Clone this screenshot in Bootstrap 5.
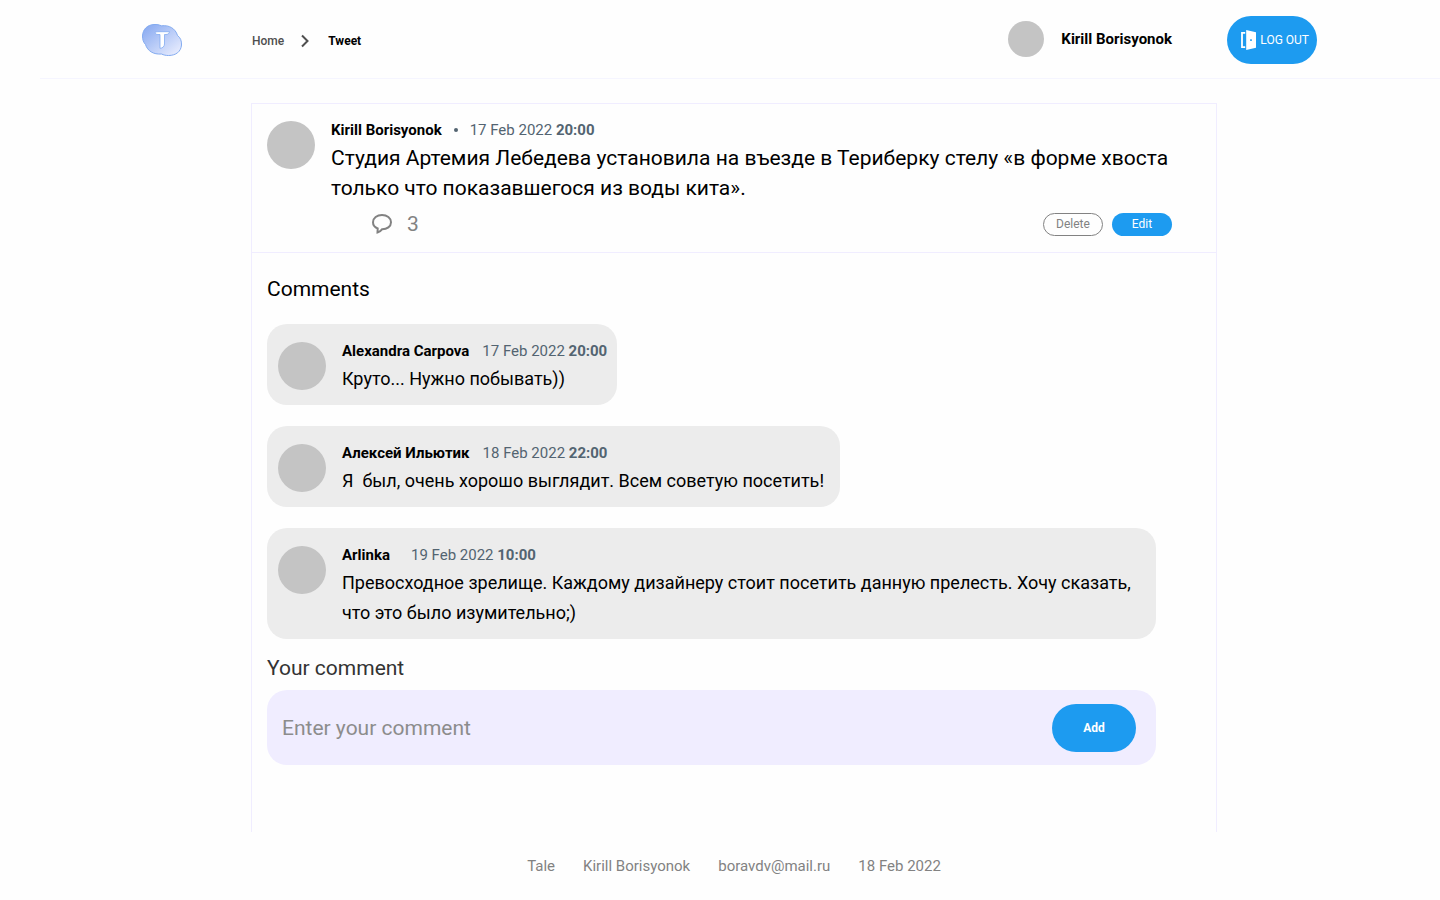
<!DOCTYPE html>
<html lang="en">
<head>
<meta charset="utf-8">
<meta name="viewport" content="width=device-width, initial-scale=1">
<title>Tweet</title>
<link rel="stylesheet" href="https://cdn.jsdelivr.net/npm/bootstrap@5.3.0/dist/css/bootstrap.min.css">
<style>
body{font-family:Roboto,"Noto Sans",sans-serif;font-size:15px;line-height:18px;color:#000;background:#fefefe;padding-left:28px}
.site-header{margin-left:12px;border-bottom:1px solid #f5f5ff}
.header-inner{max-width:1196px;min-height:78px;padding-right:21px}
.crumbs{font-size:12px;font-weight:500;margin-left:70px;gap:17px;padding-top:4px}
.crumbs a{color:#4f4f4f}
.crumbs .active{color:#000;font-weight:700}
.brand,.btn-out{margin-top:2px}
.face{background:#c4c4c4;border-radius:50%;width:48px;height:48px}
.face-sm{width:36px;height:36px}
.who{font-weight:700}
.me{gap:17px;margin-right:55px}
.btn-blue{background:#1d9bf0;color:#fff;border:0;border-radius:24px;font-size:12px;line-height:18px}
.btn-blue:hover{background:#1787d4;color:#fff}
.btn-out{width:90px;height:48px;gap:4px;padding:0 8px 0 12px}
.btn-add{width:84px;height:48px;font-weight:700}
.btn-mini{width:60px;height:23px;padding:0;font-size:12px;line-height:18px;border-radius:12px}
.btn-del{border:1px solid #828282;color:#828282;background:transparent}
.feed{max-width:966px;margin-top:24px;border:1px solid #f0edff;border-bottom:0;min-height:729px}
.tweet{padding:17px 44px 16px 15px;border-bottom:1px solid #f0edff}
.when{color:#536471}
.dot{width:4px;height:4px;border-radius:50%;background:#536471;margin:0 12px}
.tweet-text{font-size:21px;line-height:30px;margin:4px 0 9px}
.tweet-actions{gap:9px}
.replies{font-size:21px;line-height:24px;color:#828282;gap:15px;margin-left:41px}
.section-title{font-size:21px;line-height:24px;font-weight:400;margin:0}
.thread{padding:24px 60px 0 15px}
.notes{gap:21px;margin:23px 0 17px}
.note{background:#ececec;border-radius:20px;padding:18px 10px 11px 11px}
.note-head{gap:13px}
.note-text{font-size:18px;line-height:30px;margin:4px 0 0;white-space:pre-wrap}
.composer-label{color:#333}
.composer{background:#f0edff;border-radius:20px;min-height:75px;padding:0 20px 0 15px;margin-top:10px}
.composer input{font-family:inherit;font-size:21px;line-height:30px;border:0;background:transparent;padding:0;color:#000;outline:0;min-width:0}
.composer input::placeholder{color:#8c8c8c;opacity:1}
.site-footer{color:#828282;gap:28px;padding:25px 0}
</style>
</head>
<body>
<header class="site-header">
  <div class="header-inner d-flex align-items-center mx-auto">
    <a href="#" aria-label="Tale" class="brand d-block">
      <svg width="40" height="32" viewBox="0 0 40 32" class="d-block">
        <defs><linearGradient id="lg" x1="0" y1="0" x2="1" y2="1"><stop offset="0" stop-color="#83a6f0"/><stop offset="1" stop-color="#f0f2ff"/></linearGradient></defs>
        <path d="M12 .5C15 .3 17 .8 19.500 1.800C27 .8 33.500 4.500 35.500 11.500C38.500 13.500 39.700 17 39.500 21C39 27.500 34 31.500 26.500 31.500C24 31.500 21.500 31 19.500 30C11.500 30.700 5.500 27 3.500 20.500C1.500 18.500 .4 15.500 .5 12C.8 5.500 5 .9 12 .5Z" fill="url(#lg)" stroke="#83abf0" stroke-width="1"/>
        <path d="M13 8.500C14 7.700 15.500 7.700 17 7.700H27.500C27.200 9.500 26 10.500 24 10.500H22.500V20C22.500 22.500 20.500 24.200 18 24.300V10.500H16C14.500 10.500 13.300 10 13 8.500Z" fill="#fff" stroke="#83abf0" stroke-width=".8"/>
      </svg>
    </a>
    <nav class="crumbs d-flex align-items-center" aria-label="Breadcrumb">
      <a href="#" class="text-decoration-none">Home</a>
      <svg width="10" height="14" viewBox="0 0 10 14"><path d="M1 1.500L6.500 7L1 12.500" fill="none" stroke="#4f4f4f" stroke-width="2"/></svg>
      <a href="#" class="active text-decoration-none" aria-current="page">Tweet</a>
    </nav>
    <div class="me d-flex align-items-center ms-auto">
      <div class="face face-sm"></div>
      <span class="who">Kirill Borisyonok</span>
    </div>
    <button type="button" class="btn btn-blue btn-out d-flex align-items-center justify-content-end text-nowrap">
      <svg width="15" height="20" viewBox="0 0 15 20" class="flex-shrink-0"><path d="M4.200 2.800H1V17.200H4.200" fill="none" stroke="#fff" stroke-width="1.800"/><path fill-rule="evenodd" d="M5.200 0L15 2.200V17.800L5.200 20ZM9.200 9.200V11H10.800V9.200Z" fill="#fff"/></svg>
      LOG OUT
    </button>
  </div>
</header>

<main class="feed mx-auto">
  <article class="tweet d-flex gap-3">
    <div class="face flex-shrink-0"></div>
    <div class="flex-grow-1">
      <div class="d-flex align-items-center">
        <span class="who">Kirill Borisyonok</span><span class="dot"></span>
        <span class="when">17 Feb 2022 <b>20:00</b></span>
      </div>
      <p class="tweet-text">Студия Артемия Лебедева установила на въезде в Териберку стелу «в форме хвоста только что показавшегося из воды кита».</p>
      <div class="tweet-actions d-flex align-items-center">
        <div class="replies d-flex align-items-center me-auto">
          <svg width="20" height="20" viewBox="0 0 20 20"><path d="M10 1C15 1 19 4 19 8.300C19 12.500 15 15.400 10 15.300C8.700 17 7.300 18 5.500 18.500L5.700 14.500C3 13.500 1 11.300 1 8.300C1 4 5 1 10 1Z" fill="none" stroke="#828282" stroke-width="2"/></svg>
          <span>3</span>
        </div>
        <button type="button" class="btn btn-mini btn-del">Delete</button>
        <button type="button" class="btn btn-mini btn-blue">Edit</button>
      </div>
    </div>
  </article>

  <section class="thread">
    <h2 class="section-title">Comments</h2>
    <div class="notes d-flex flex-column align-items-start">
      <article class="note d-flex gap-3">
        <div class="face flex-shrink-0"></div>
        <div>
          <div class="note-head d-flex"><span class="who">Alexandra Carpova</span><span class="when">17 Feb 2022 <b>20:00</b></span></div>
          <p class="note-text">Круто... Нужно побывать))</p>
        </div>
      </article>
      <article class="note d-flex gap-3 pe-3">
        <div class="face flex-shrink-0"></div>
        <div>
          <div class="note-head d-flex"><span class="who">Алексей Ильютик</span><span class="when">18 Feb 2022 <b>22:00</b></span></div>
          <p class="note-text">Я  был, очень хорошо выглядит. Всем советую посетить!</p>
        </div>
      </article>
      <article class="note d-flex gap-3 w-100">
        <div class="face flex-shrink-0"></div>
        <div>
          <div class="note-head d-flex"><span class="who pe-2">Arlinka</span><span class="when">19 Feb 2022 <b>10:00</b></span></div>
          <p class="note-text">Превосходное зрелище. Каждому дизайнеру стоит посетить данную прелесть. Хочу сказать, что это было изумительно;)</p>
        </div>
      </article>
    </div>
    <form>
      <label for="comment" class="section-title composer-label d-block">Your comment</label>
      <div class="composer d-flex align-items-center">
        <input type="text" id="comment" class="flex-grow-1" placeholder="Enter your comment">
        <button type="button" class="btn btn-blue btn-add">Add</button>
      </div>
    </form>
  </section>
</main>

<footer class="site-footer d-flex justify-content-center">
  <span>Tale</span><span>Kirill Borisyonok</span><span>boravdv@mail.ru</span><span>18 Feb 2022</span>
</footer>
<script src="https://cdn.jsdelivr.net/npm/bootstrap@5.3.0/dist/js/bootstrap.bundle.min.js"></script>
</body>
</html>
